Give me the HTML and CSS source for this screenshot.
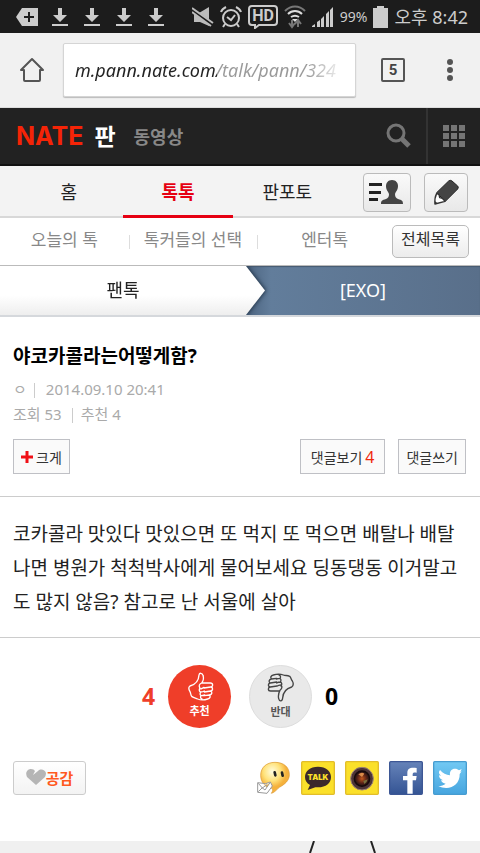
FILE: index.html
```html
<!DOCTYPE html>
<html lang="ko">
<head>
    <meta charset="UTF-8">
    <meta name="viewport" content="width=device-width, initial-scale=1.0">
    <title>네이트 판</title>
    <link rel="stylesheet" href="styles.css">
</head>
<body>
    <div class="status-bar">
        <svg width="22" height="18" viewBox="0 0 22 18"><path fill="#ccc" d="M6 0h16v18H6L0 9z"/><path stroke="#1c1c1c" stroke-width="2" d="M8 9h10M13 4v10"/></svg>
        <div class="downloads">
            <svg width="16" height="20" viewBox="0 0 16 20"><path fill="#ccc" d="M6 1h4v7h5l-7 7-7-7h5zM0 17h16v2H0z"/></svg>
            <svg width="16" height="20" viewBox="0 0 16 20"><path fill="#ccc" d="M6 1h4v7h5l-7 7-7-7h5zM0 17h16v2H0z"/></svg>
            <svg width="16" height="20" viewBox="0 0 16 20"><path fill="#ccc" d="M6 1h4v7h5l-7 7-7-7h5zM0 17h16v2H0z"/></svg>
            <svg width="16" height="20" viewBox="0 0 16 20"><path fill="#ccc" d="M6 1h4v7h5l-7 7-7-7h5zM0 17h16v2H0z"/></svg>
        </div>
        <div class="status-right">
            <svg width="22" height="22" viewBox="0 0 22 22"><path fill="#bbb" d="M2 7h5l10-6v19L8 16H2z"/><path stroke="#1c1c1c" stroke-width="4" d="M0 4l21 15"/><path stroke="#bbb" stroke-width="2" d="M0 2l21 15M0 6l19 14"/></svg>
            <svg width="22" height="22" viewBox="0 0 22 22" fill="none" stroke="#ccc" stroke-width="2"><circle cx="11" cy="12" r="8"/><path d="M7 11l4 3 4-5M1 6c1-3 3-4 5-5M21 6c-1-3-3-4-5-5M5 18l-2 3M17 18l2 3"/></svg>
            <svg width="30" height="24" viewBox="0 0 30 24" fill="none" stroke="#ccc" stroke-width="2"><path d="M4 1h22q3 0 3 3v13q0 3-3 3H11l-4 3v-3H4q-3 0-3-3V4q0-3 3-3z"/><text x="15" y="16" text-anchor="middle" class="hd-text">HD</text></svg>
            <svg width="22" height="24" viewBox="0 0 22 24" fill="none" stroke="#ddd" stroke-width="2"><path stroke="#777" d="M1 6c6-6 14-6 20 0"/><path d="M4 9c4-4 10-4 14 0M7 12c3-2 5-2 8 0"/><path fill="#ddd" stroke="none" d="M8 14h6l-3 3z"/><path stroke="#777" d="M8 15v6M5 18l3 4 3-4M14 22v-6M11 19l3-4 3 4"/></svg>
            <svg width="22" height="22" viewBox="0 0 22 22" fill="#ccc"><path d="M0 20l3-2v3H0zM5 16l3-2v7H5zM9 13l3-3v11H9zM14 8l3-3v16h-3zM18 4l3-3v20h-3z"/></svg>
            <span class="battery-text">99%</span>
            <svg width="15" height="22" viewBox="0 0 15 22" fill="#ccc"><path d="M4 0h7v2h4v20H0V2h4z"/></svg>
            <span class="clock">오후 8:42</span>
        </div>
    </div>

    <div class="browser-bar">
        <button type="button" class="bar-btn home-btn" aria-label="홈페이지">
            <svg width="26" height="26" viewBox="0 0 26 26" fill="none" stroke="#555" stroke-width="2" stroke-linejoin="round" stroke-linecap="round"><path d="M2 13L13 2l11 11h-3v10q0 1-1 1H6q-1 0-1-1V13z"/></svg>
        </button>
        <input class="address" type="text" aria-label="주소" value="m.pann.nate.com/talk/pann/324">
        <button type="button" class="tabs-btn" aria-label="탭">5</button>
        <button type="button" class="bar-btn" aria-label="메뉴">
            <svg width="6" height="22" viewBox="0 0 6 22" fill="#555"><circle cx="3" cy="3" r="3"/><circle cx="3" cy="11" r="3"/><circle cx="3" cy="19" r="3"/></svg>
        </button>
    </div>

    <header class="site-header">
        <a href="#" class="logo">NATE</a>
        <a href="#" class="logo-pann">판</a>
        <a href="#" class="video-link">동영상</a>
        <button type="button" class="search-btn" aria-label="검색">
            <svg width="26" height="26" viewBox="0 0 26 26" fill="none" stroke="#757575"><circle cx="10" cy="10" r="8" stroke-width="3"/><path stroke-width="5" d="M15 15l8 8"/></svg>
        </button>
        <button type="button" class="apps-btn" aria-label="전체 서비스">
            <svg width="22" height="22" viewBox="0 0 22 22" fill="#757575"><path d="M0 0h6v6H0zM8 0h6v6H8zM16 0h6v6h-6zM0 8h6v6H0zM8 8h6v6H8zM16 8h6v6h-6zM0 16h6v6H0zM8 16h6v6H8zM16 16h6v6h-6z"/></svg>
        </button>
    </header>

    <nav class="main-nav">
        <a href="#">홈</a>
        <a href="#" class="active">톡톡</a>
        <a href="#">판포토</a>
        <div class="nav-tools">
            <button type="button" class="tool-btn profile-btn" aria-label="내 정보">
                <svg width="35" height="26" viewBox="0 0 35 26"><path fill="#222" d="M0 4h13v3H0zM0 12h12v3H0zM0 19h9v3H0z"/><path fill="#444" d="M23 1c4 0 6 3 6 6 0 4-2 5-3 8 0 3 1 4 3 5 4 1 5 2 5 5H12c0-3 1-4 5-5 2-1 3-2 3-5-1-3-3-4-3-8 0-3 2-6 6-6z"/></svg>
            </button>
            <button type="button" class="tool-btn" aria-label="글쓰기">
                <svg width="26" height="26" viewBox="581 223 78 78"><path fill="#444" stroke="#222" stroke-width="3" d="M592 264l36-35q5-4 10 0l17 15q4 4 0 9l-37 37z"/><path fill="#fff" stroke="#333" stroke-width="4" stroke-linejoin="round" d="M592 266l7 4 2 9 8 2 8 9-30 8q-2-18 5-32z"/><path fill="#333" d="M586 289l9 7-9 2z"/></svg>
            </button>
        </div>
    </nav>

    <nav class="sub-nav">
        <a href="#">오늘의 톡</a>
        <a href="#">톡커들의 선택</a>
        <a href="#">엔터톡</a>
        <button type="button" class="all-btn">전체목록</button>
    </nav>

    <div class="channel">
        <a href="#" class="channel-parent">팬톡</a>
        <a href="#" class="channel-current">[EXO]</a>
    </div>

    <main>
        <section class="post-head">
            <h1>야코카콜라는어떻게함?</h1>
            <p class="meta"><span class="writer">ㅇ</span><span>2014.09.10 20:41</span></p>
            <p class="meta"><span class="views">조회 53</span><span>추천 4</span></p>
            <div class="post-buttons">
                <button type="button" class="btn"><svg width="12" height="12" viewBox="0 0 12 12"><path stroke="#f00f16" stroke-width="3" d="M0 6h12M6 0v12"/></svg>크게</button>
                <button type="button" class="btn view-btn">댓글보기 <em>4</em></button>
                <button type="button" class="btn">댓글쓰기</button>
            </div>
        </section>

        <p class="post-body">코카콜라 맛있다 맛있으면 또 먹지 또 먹으면 배탈나 배탈나면 병원가 척척박사에게 물어보세요 딩동댕동 이거말고도 많지 않음? 참고로 난 서울에 살아</p>

        <section class="votes">
            <span class="count up">4</span>
            <button type="button" class="vote vote-up">
                <svg width="28" height="31" viewBox="196 62 84 93" fill="none" stroke="#fff" stroke-width="4" stroke-linejoin="round" stroke-linecap="round"><path d="M243 98h26c9 0 9 11 1 12l-20 3M271 110c7 2 6 11-1 12l-19 3M270 122c6 3 4 11-3 12l-16 2M266 134c5 4 2 11-5 12-12 4-20 4-30 0-7-3-11-3-17-7-5-5-3-10-6-15-4-7-6-13 0-17 18-5 26-14 27-33 1-7 10-7 12 1 3 9 1 17-4 23-7 3-9 7-6 14 1 6 8 3 13-1M238 113c-4 5-2 11 2 12 4 0 8-1 11-3M240 125c-3 5-2 10 2 11 4 0 7-1 10-2M241 136c-3 4-1 9 3 10"/></svg>
                <span>추천</span>
            </button>
            <button type="button" class="vote vote-down">
                <svg width="28" height="31" viewBox="443 63 84 93" fill="none" stroke="#444" stroke-width="4" stroke-linejoin="round" stroke-linecap="round"><path d="M480 120h-26c-9 0-9-11-1-12l20-3M452 108c-7-2-6-11 1-12l19-3M453 96c-6-3-4-11 3-12l16-2M457 84c-5-4-2-11 5-12 12-4 20-4 30 0 7 3 11 0 19 4 5 5 4 9 8 14 4 7 4 13-2 18-18 5-26 14-27 33-1 11-10 11-12 2-2-9 0-18 4-25 5-4 7-7 5-12-1-6-8-4-13-1M485 105c4-5 2-11-2-12-4 0-8 1-11 3M483 93c3-5 2-10-2-11-4 0-7 1-10 2M482 82c3-4 1-9-3-10"/></svg>
                <span>반대</span>
            </button>
            <span class="count">0</span>
        </section>

        <section class="share">
            <button type="button" class="empathy-btn">
                <svg width="20" height="17" viewBox="0 0 20 17" fill="#b5b5b5"><path d="M10 16L1 8C-1 4 1 0 5 0q3 0 4 2L7 6l5-4c3-3 7-1 8 2q0 2-1 4z"/></svg>공감
            </button>
            <a href="#" aria-label="네이트온">
                <svg width="34" height="34" viewBox="0 0 102 102"><defs><radialGradient id="face" cx="40%" cy="30%"><stop offset="0" stop-color="#fffde0"/><stop offset=".6" stop-color="#ffe27a"/><stop offset="1" stop-color="#f5b13c"/></radialGradient></defs><path fill="url(#face)" stroke="#d9962d" stroke-width="2" d="M54 4c26 0 43 14 43 37 0 18-14 29-30 38-8 7-16 17-24 18 5-7 5-12 2-15-20-2-34-18-34-39C11 20 28 4 54 4z"/><path stroke="#222" stroke-width="8" stroke-linecap="round" d="M53 34l2 9M75 35l2 9"/><path fill="#fff" stroke="#999" stroke-width="3" d="M2 65l24 3 14-5 6 12-16 22-28-3zM4 67l12 14 14-10M4 92l12-12M15 80l9 7 15-22"/></svg>
            </a>
            <a href="#" aria-label="카카오톡">
                <svg width="34" height="34" viewBox="0 0 102 102"><rect x="2" y="2" width="98" height="98" rx="3" fill="#fbe02a" stroke="#e2bd2b" stroke-width="4"/><path fill="#3c292b" d="M51 17c24 0 39 13 39 31S75 79 51 79l-8 0-23 8 7-15C17 67 12 58 12 48c0-18 15-31 39-31z"/><text x="51" y="57" text-anchor="middle" class="talk-text">TALK</text></svg>
            </a>
            <a href="#" aria-label="카카오스토리">
                <svg width="34" height="34" viewBox="0 0 102 102"><defs><radialGradient id="lens"><stop offset="0" stop-color="#c4581d"/><stop offset=".6" stop-color="#592217"/><stop offset="1" stop-color="#181012"/></radialGradient></defs><rect x="2" y="2" width="98" height="98" rx="3" fill="#fbe02a" stroke="#e2bd2b" stroke-width="4"/><circle cx="51" cy="53" r="34" fill="#4d3437" stroke="#9b8178" stroke-width="3"/><circle cx="51" cy="53" r="23" fill="url(#lens)" stroke="#16090b" stroke-width="4"/><path fill="#db8c4b" d="M40 40q10-8 18-2l-7 10z"/><path fill="#78713c" d="M55 60l13-5q-2 10-10 14z"/></svg>
            </a>
            <a href="#" aria-label="페이스북">
                <svg width="34" height="34" viewBox="0 0 102 102"><defs><linearGradient id="fb" x2="0" y2="1"><stop stop-color="#6683b9"/><stop offset="1" stop-color="#345494"/></linearGradient></defs><rect x="2" y="2" width="98" height="98" rx="3" fill="url(#fb)" stroke="#3d5795" stroke-width="4"/><path fill="#fff" d="M55 98V58H42V45h13V36c0-13 8-18 28-15v14c-9-1-12 0-12 5v5h12l-2 13H71v40z"/></svg>
            </a>
            <a href="#" aria-label="트위터">
                <svg width="34" height="34" viewBox="0 0 102 102"><defs><linearGradient id="tw" x2="0" y2="1"><stop stop-color="#72c9f3"/><stop offset="1" stop-color="#46a5df"/></linearGradient></defs><rect x="2" y="2" width="98" height="98" rx="3" fill="url(#tw)" stroke="#469cd0" stroke-width="4"/><path fill="#fff" d="M21 27c9 10 18 15 30 16-2-12 5-20 15-20 5 0 9 2 12 5l8-4-4 9 4-2-6 8c1 26-18 42-40 42-9 0-17-2-24-6 9 0 16-2 22-7-7-1-12-5-14-10h6c-8-3-12-8-12-15l6 1c-7-5-8-11-3-17z"/></svg>
            </a>
        </section>
    </main>

    <footer class="banner">
        <svg width="68" height="12" viewBox="0 0 68 12" fill="none" stroke="#222" stroke-width="2"><path d="M5 0L1 12M62 0l4 12"/></svg>
    </footer>
</body>
</html>
```
FILE: styles.css
```css
* { box-sizing: border-box; }
body {
    margin: 0;
    background: #fff;
    color: #222;
    font-family: "Noto Sans", "Noto Sans CJK KR", sans-serif;
    font-size: 16px;
}
a { color: inherit; text-decoration: none; }
button, input { font-family: inherit; color: inherit; margin: 0; padding: 0; }
button { cursor: pointer; }
svg { display: block; flex: none; }

/* phone status bar */
.status-bar {
    display: flex;
    align-items: center;
    height: 33px;
    padding: 0 12px 0 16px;
    background: #1c1c1c;
    color: #ccc;
}
.downloads { display: flex; gap: 16px; margin-left: 14px; }
.status-right { display: flex; align-items: center; gap: 6px; margin-left: auto; white-space: nowrap; }
.hd-text { fill: #ccc; stroke: none; font: bold 16px Roboto, sans-serif; }
.battery-text { font-size: 14px; }
.clock { font-size: 18px; line-height: 32px; }

/* browser toolbar */
.browser-bar {
    display: flex;
    align-items: center;
    height: 75px;
    padding: 0 27px 0 19px;
    background: #f1f1f1;
    border-bottom: 1px solid #ddd;
}
.bar-btn { border: 0; background: none; }
.home-btn { margin-right: 18px; }
.address {
    flex: 1;
    min-width: 0;
    height: 54px;
    padding: 0 11px;
    border: 1px solid #d5d5d5;
    border-radius: 2px;
    box-shadow: 0 1px 1px #bbb;
    font-size: 18px;
    font-style: italic;
    color: transparent;
    /* host name dark, path grey, fading out at the right edge */
    background:
        linear-gradient(90deg, #222 153px, #999 153px, #999 calc(100% - 48px), #fff calc(100% - 10px)) text,
        #fff;
}
.tabs-btn {
    width: 24px;
    height: 24px;
    margin: 0 42px 0 25px;
    border: 2px solid #555;
    border-radius: 2px;
    background: none;
    color: #444;
    font: bold 15px/20px Roboto, sans-serif;
}

/* site header */
.site-header {
    display: flex;
    align-items: center;
    height: 58px;
    padding-left: 16px;
    background: #222;
    border-bottom: 2px solid #111;
}
.logo { color: #f52407; font: 700 25px/30px Inter, sans-serif; }
.logo-pann { margin-left: 11px; color: #fff; font-size: 23px; font-weight: bold; line-height: 30px; }
.video-link { margin-left: 18px; color: #888; font-size: 18px; font-weight: bold; }
.search-btn { margin-left: auto; padding: 0 14px; border: 0; background: none; }
.apps-btn {
    align-self: stretch;
    padding: 0 15px;
    border: 0;
    border-left: 2px solid #333;
    background: none;
}

.main-nav {
    display: flex;
    height: 52px;
    padding-left: 14px;
    background: #f3f3f3;
    border-bottom: 2px solid #d8d8d8;
    font-size: 18px;
    line-height: 52px;
    text-align: center;
}
.main-nav > a { flex: 1; height: 52px; }
.main-nav .active { border-bottom: 3px solid #e60012; color: #e60012; font-weight: bold; }
.nav-tools { display: flex; align-items: center; gap: 13px; padding: 2px 12px 0 21px; }
.tool-btn {
    display: flex;
    align-items: center;
    justify-content: center;
    width: 44px;
    height: 39px;
    border: 1px solid #bbb;
    border-radius: 4px;
    background: linear-gradient(#fafafa, #e8e8e8);
}
.profile-btn { width: 48px; }

.sub-nav {
    display: flex;
    align-items: center;
    height: 48px;
    padding-right: 11px;
    border-bottom: 1px solid #bbb;
    color: #888;
    font-size: 17px;
    line-height: 24px;
    text-align: center;
    white-space: nowrap;
}
.sub-nav a { flex: 128; position: relative; padding-bottom: 3px; }
.sub-nav a:nth-child(3) { flex: 134; }
/* short divider between the links */
.sub-nav a + a::before {
    content: "";
    position: absolute;
    left: 0;
    top: 7px;
    height: 14px;
    border-left: 1px solid #ddd;
}
.all-btn {
    width: 77px;
    height: 33px;
    padding-bottom: 6px;
    border: 1px solid #bbb;
    border-radius: 5px;
    background: linear-gradient(#fff, #ececec);
    color: #333;
    font-size: 16px;
    line-height: 24px;
}

.channel {
    display: flex;
    height: 51px;
    overflow: hidden;
    border-bottom: 2px solid #d5d8dc;
    font-size: 18px;
    line-height: 48px;
    text-align: center;
}
.channel-parent {
    flex: 246;
    position: relative;
    z-index: 1;
    background: linear-gradient(#fff 60%, #eee);
    filter: drop-shadow(1px 0 2px #1f3145);
}
/* arrow head pointing to the current channel */
.channel-parent::after {
    content: "";
    position: absolute;
    left: 100%;
    top: 0;
    width: 19px;
    height: 100%;
    background: inherit;
    clip-path: polygon(0 0, 100% 50%, 0 100%);
}
.channel-current {
    flex: 234;
    background: linear-gradient(90deg, #4d6581, #627d9b 25px, #596f8a);
    box-shadow: inset 0 1px 1px #465a70;
    color: #fff;
}

/* post */
.post-head { padding: 25px 14px 22px 13px; border-bottom: 1px solid #ccc; }
h1 { margin: 0 0 7px; color: #000; font-size: 19px; line-height: 28px; }
.meta { margin: 0; color: #aaa; font-size: 15px; line-height: 25px; }
.writer, .views { position: relative; margin-right: 19px; }
.writer::after, .views::after {
    content: "";
    position: absolute;
    right: -8px;
    top: 4px;
    height: 15px;
    border-left: 1px solid #ccc;
}
.views::after { right: -11px; }
.post-buttons { display: flex; gap: 13px; margin-top: 12px; }
.btn {
    display: flex;
    align-items: center;
    gap: 3px;
    height: 35px;
    padding: 0 7px;
    border: 1px solid #bfc0c5;
    background: #fafafa;
    color: #333;
    font-size: 14px;
}
.btn em { color: #f0280c; font-style: normal; font-size: 16px; }
.view-btn { margin-left: auto; padding: 0 10px; }

.post-body {
    margin: 0;
    padding: 20px 13px 18px;
    border-bottom: 1px solid #ccc;
    color: #222;
    font-size: 19px;
    line-height: 34px;
}

.votes { display: flex; align-items: center; justify-content: center; padding: 27px 0 33px; }
.vote {
    display: flex;
    flex-direction: column;
    align-items: center;
    width: 63px;
    height: 63px;
    padding-top: 6px;
    border: 0;
    border-radius: 50%;
    font-size: 11px;
    font-weight: bold;
    line-height: 18px;
}
.vote-up { margin-right: 18px; background: #ef3e29; color: #fff; }
.vote-down { border: 1px solid #ddd; background: #e9e9e9; color: #555; }
.count { width: 39px; padding-bottom: 2px; color: #000; font-size: 23px; font-weight: bold; line-height: 32px; text-align: center; }
.count.up { color: #ef3e29; }

.share { display: flex; align-items: center; gap: 10px; padding: 0 13px 46px; }
.empathy-btn {
    display: flex;
    align-items: center;
    justify-content: center;
    width: 73px;
    height: 34px;
    margin-right: auto;
    padding-bottom: 2px;
    border: 1px solid #ccc;
    border-radius: 3px;
    background: linear-gradient(#fff, #f3f3f3);
    color: #ff5a1f;
    font-size: 15px;
    font-weight: bold;
}
.talk-text { fill: #fbe02a; font: 900 23px Inter, sans-serif; }

.banner { display: flex; justify-content: flex-end; padding-right: 103px; background: #f0f0f0; }
```
